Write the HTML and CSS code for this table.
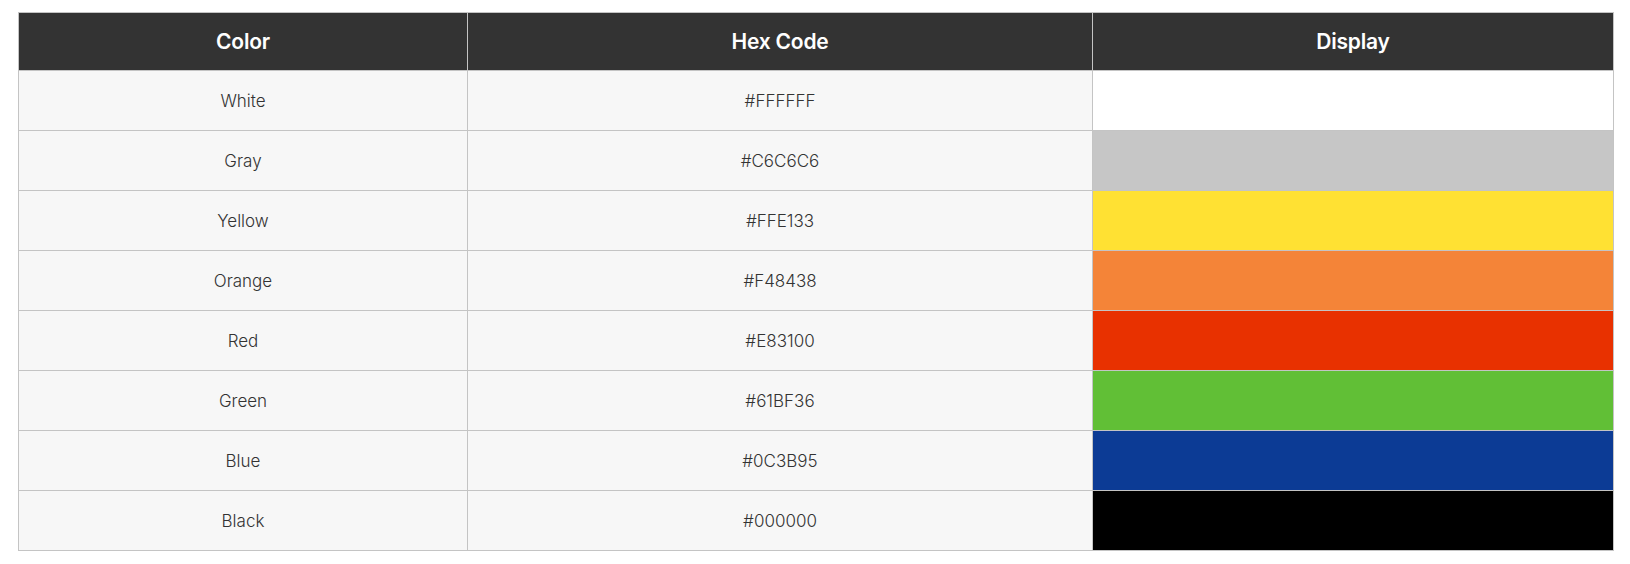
FILE: index.html
```html
<!DOCTYPE html>
<html lang="en">
<head>
<meta charset="utf-8">
<title>Colors</title>
<link rel="stylesheet" href="styles.css">
</head>
<body>
<div class="wrap">
<table class="colors">
  <colgroup>
    <col class="c-name">
    <col class="c-hex">
    <col class="c-disp">
  </colgroup>
  <thead>
    <tr><th>Color</th><th>Hex Code</th><th>Display</th></tr>
  </thead>
  <tbody>
    <tr><td>White</td><td>#FFFFFF</td><td class="swatch" style="background:#FFFFFF"></td></tr>
    <tr><td>Gray</td><td>#C6C6C6</td><td class="swatch" style="background:#C6C6C6"></td></tr>
    <tr><td>Yellow</td><td>#FFE133</td><td class="swatch" style="background:#FFE133"></td></tr>
    <tr><td>Orange</td><td>#F48438</td><td class="swatch" style="background:#F48438"></td></tr>
    <tr><td>Red</td><td>#E83100</td><td class="swatch" style="background:#E83100"></td></tr>
    <tr><td>Green</td><td>#61BF36</td><td class="swatch" style="background:#61BF36"></td></tr>
    <tr><td>Blue</td><td>#0C3B95</td><td class="swatch" style="background:#0C3B95"></td></tr>
    <tr><td>Black</td><td>#000000</td><td class="swatch" style="background:#000000"></td></tr>
  </tbody>
</table>
</div>
</body>
</html>
```
FILE: styles.css
```css
html, body {
  margin: 0;
  padding: 0;
  background: #ffffff;
}
.wrap {
  padding: 12px 16px 0 18px;
}
.colors {
  width: 100%;
  border-collapse: collapse;
  table-layout: fixed;
  font-family: Inter, "Noto Sans", sans-serif;
}
.c-name { width: 449px; }
.c-hex { width: 625px; }
.colors th,
.colors td {
  border: 1px solid #c4c4c4;
  text-align: center;
  padding: 0;
}
.colors th {
  background: #333333;
  color: #ffffff;
  font-size: 21px;
  font-weight: 600;
  height: 57px;
  letter-spacing: -0.2px;
}
.colors td {
  background: #f7f7f7;
  color: #333333;
  font-size: 17px;
  font-weight: 300;
  height: 59px;
}
```
